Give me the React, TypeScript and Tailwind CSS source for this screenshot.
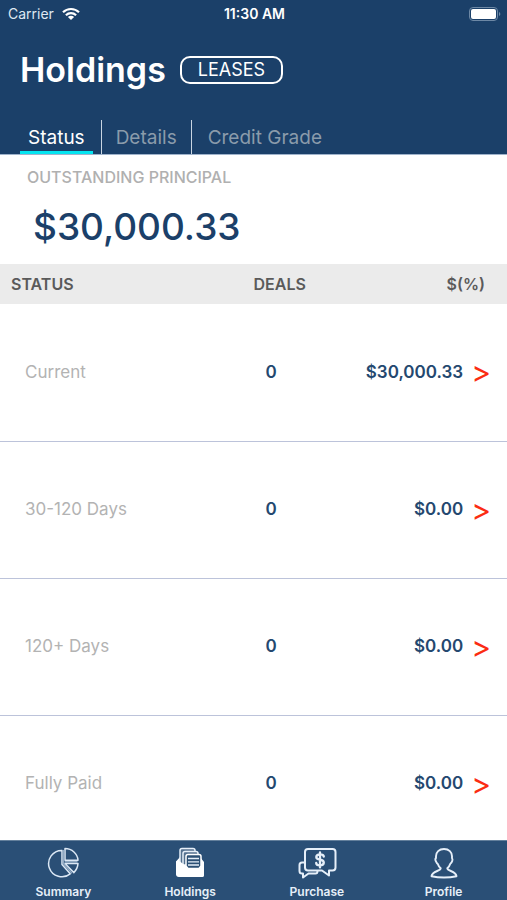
import { useState } from "react"

const tabs = ["Status", "Details", "Credit Grade"]

const rows = [
    { status: "Current", deals: 0, amount: "$30,000.33" },
    { status: "30-120 Days", deals: 0, amount: "$0.00" },
    { status: "120+ Days", deals: 0, amount: "$0.00" },
    { status: "Fully Paid", deals: 0, amount: "$0.00" },
]

function WifiIcon() {
    return (
        <svg width="18" height="14" viewBox="0 0 18 14" fill="none" stroke="white" strokeWidth="2.2">
            <path d="M1 5.2C5.4 .9 12.6 .9 17 5.2" />
            <path d="M3.9 8.2C6.8 5.4 11.2 5.4 14.1 8.2" />
            <path d="M9 13 5.9 9.9C7.7 8.4 10.3 8.4 12.1 9.9Z" fill="white" stroke="none" />
        </svg>
    )
}

function BatteryIcon() {
    return (
        <svg width="32" height="14" viewBox="0 0 32 14">
            <rect x=".5" y=".5" width="28" height="13" rx="3.5" fill="none" stroke="#6d88a5" />
            <rect x="2" y="2" width="25" height="10" rx="2" fill="white" />
            <path d="M30 5v4c1.8-.6 1.8-3.4 0-4Z" fill="#6d88a5" />
        </svg>
    )
}

function SummaryIcon() {
    return (
        <svg width="32" height="32" viewBox="0 0 32 32" fill="none" stroke="#dce8f5" strokeWidth="1.5" strokeLinejoin="round">
            <path d="M15 3.4A13.2 13.2 0 1 0 23.2 26.8L15 17.5Z" />
            <path d="M18 1.6V13.2H31C30.6 6.8 25 1.6 18 1.6Z" />
            <path d="M18 16.4H31C30.8 20 29.4 23 26.8 25.6Z" />
            <path d="M16.5 3V16.8L25 26.2M18 14.8H30.5" strokeWidth="1.7" stroke="#8fa8c2" />
        </svg>
    )
}

function HoldingsIcon() {
    return (
        <svg width="32" height="32" viewBox="0 0 32 32" fill="none">
            <path d="M2 14.5 6 10V19H26V10L30 15V28Q30 30 28 30H5Q2 30 2 27Z" fill="white" />
            <g fill="#54718f" stroke="#e6eff9" strokeWidth="1.5" strokeLinejoin="round">
                <path d="M6 18V3.5Q6 1.5 8 1.5H19Q21 1.5 21 3.5V18Z" />
                <path d="M9 18V6.5Q9 4.5 11 4.5H22Q24 4.5 24 6.5V18Z" />
            </g>
            <path d="M2 14.5H6L12 19V22H26L28 16 30 15V28Q30 30 28 30H6Q4 30 2 27Z" fill="white" />
            <path
                d="M12 19V9.5Q12 7.5 14 7.5H25Q27 7.5 27 9.5V19L25 21.5H14Z"
                fill="#2c5074"
                stroke="white"
                strokeWidth="1.5"
            />
            <path d="M14 11.5H25M14 14.8H25M14 18H25" stroke="#e6eff9" strokeWidth="1.3" />
        </svg>
    )
}

function PurchaseIcon() {
    return (
        <svg width="40" height="32" viewBox="0 0 40 32" fill="none" stroke="#e6eff9" strokeWidth="2" strokeLinejoin="round" strokeLinecap="round">
            <path d="M11 2H35.5Q38.5 2 38.5 5V20.5Q38.5 23.5 35.5 23.5H32V28.5L25 23.5H11Q8 23.5 8 20.5V5Q8 2 11 2Z" />
            <path d="M8 15.5H5Q2.5 15.5 2.5 18V24Q2.5 26.5 5 26.5H6V30.5L11.5 26.5H18.5Q20.5 26.5 20.5 24" />
            <path d="M26.8 9.5Q26.5 7.3 23 7.3T19.3 10Q19.3 12.2 23 12.7T26.8 15.6Q26.8 18.4 23 18.4T19.2 16M23 5.3V20.4" strokeWidth="2.3" />
        </svg>
    )
}

function ProfileIcon() {
    return (
        <svg width="32" height="32" viewBox="0 0 32 32" fill="none" stroke="#e6eff9" strokeWidth="1.9" strokeLinejoin="round">
            <path d="M16 2C11 2 8 5.2 8 9.2V11Q6.8 12 7.8 14.2T9.7 16.8C10.2 18.6 11.3 20 12.7 21.2C12.7 24.3 4.2 23.8 3.5 29.2Q9.5 30.5 16 30.5T28.5 29.2C27.8 23.8 19.3 24.3 19.3 21.2C20.7 20 21.8 18.6 22.3 16.8Q23.5 16 24.2 14.2T24 11V9.2C24 5.2 21 2 16 2Z" />
        </svg>
    )
}

const navItems = [
    { label: "Summary", icon: <SummaryIcon /> },
    { label: "Holdings", icon: <HoldingsIcon /> },
    { label: "Purchase", icon: <PurchaseIcon /> },
    { label: "Profile", icon: <ProfileIcon /> },
]

export default function App() {
    const [activeTab, setActiveTab] = useState("Status")

    return (
        <div className="flex h-screen flex-col bg-white font-['Inter',sans-serif]">
            <header className="shrink-0 border-b border-[#9fb3cb] bg-[#1b4069] text-white">
                <div className="grid h-7 grid-cols-3 items-center pl-2 pr-1.5 text-sm text-[#dfe8f2]">
                    <div className="flex items-center gap-2">
                        <span>Carrier</span>
                        <WifiIcon />
                    </div>
                    <span className="text-center font-semibold text-white">11:30 AM</span>
                    <div className="flex justify-end">
                        <BatteryIcon />
                    </div>
                </div>

                <div className="flex items-center gap-3.5 px-5 pt-5">
                    <h1 className="text-[34px] leading-11 font-semibold">Holdings</h1>
                    <button className="h-7 rounded-[10px] border-2 border-white px-4 text-lg leading-6">
                        LEASES
                    </button>
                </div>

                <div className="mt-7 flex h-[34px] pl-5">
                    {tabs.map((tab) => (
                        <button
                            key={tab}
                            onClick={() => setActiveTab(tab)}
                            className="flex border-r border-[#c9d5e2] px-2 text-[19px] leading-9 first:pl-0 last:border-r-0 last:pl-2.5"
                        >
                            <span
                                className={
                                    activeTab === tab
                                        ? "h-full border-b-3 border-[#04e4f0] px-2 text-white"
                                        : "px-1.5 text-[#8a9bab]"
                                }
                            >
                                {tab}
                            </span>
                        </button>
                    ))}
                </div>
            </header>

            <main className="min-h-0 flex-1 overflow-hidden">
                <section className="h-[109px] px-[27px] pt-3">
                    <h2 className="text-base leading-5 font-medium text-[#b0b0b0]">OUTSTANDING PRINCIPAL</h2>
                    <p className="px-1.5 pt-4 text-[37px] leading-12 font-medium text-[#1b4069]">$30,000.33</p>
                </section>

                <table className="w-full table-fixed">
                    <thead>
                        <tr className="h-10 bg-[#ebebeb] text-left text-base text-[#5a5a5a]">
                            <th className="w-1/2 pl-[11px] font-semibold">STATUS</th>
                            <th className="w-1/6 font-semibold">DEALS</th>
                            <th className="pr-[22px] text-right font-semibold">$(%)</th>
                        </tr>
                    </thead>
                    <tbody>
                        {rows.map((row) => (
                            <tr key={row.status} className="h-[137px] border-b border-[#bcc3da] text-[17px]">
                                <td className="pl-[25px] text-[#b3b3b3]">{row.status}</td>
                                <td className="pl-3 font-semibold text-[#24486f]">{row.deals}</td>
                                <td className="pr-4">
                                    <div className="flex items-center justify-end gap-2 font-semibold text-[#24486f]">
                                        <span>{row.amount}</span>
                                        <button
                                            aria-label={`Open ${row.status}`}
                                            className="text-[30px] leading-10 font-normal text-[#fb2c12]"
                                        >
                                            &gt;
                                        </button>
                                    </div>
                                </td>
                            </tr>
                        ))}
                    </tbody>
                </table>
            </main>

            <nav className="grid h-15 shrink-0 grid-cols-4 border-t border-[#64809c] bg-[#2a4f76] text-[#e6eff9]">
                {navItems.map((item) => (
                    <a key={item.label} href="#" className="flex flex-col items-center pt-1.5">
                        {item.icon}
                        <span className="pt-[5px] text-xs font-semibold">{item.label}</span>
                    </a>
                ))}
            </nav>
        </div>
    )
}
